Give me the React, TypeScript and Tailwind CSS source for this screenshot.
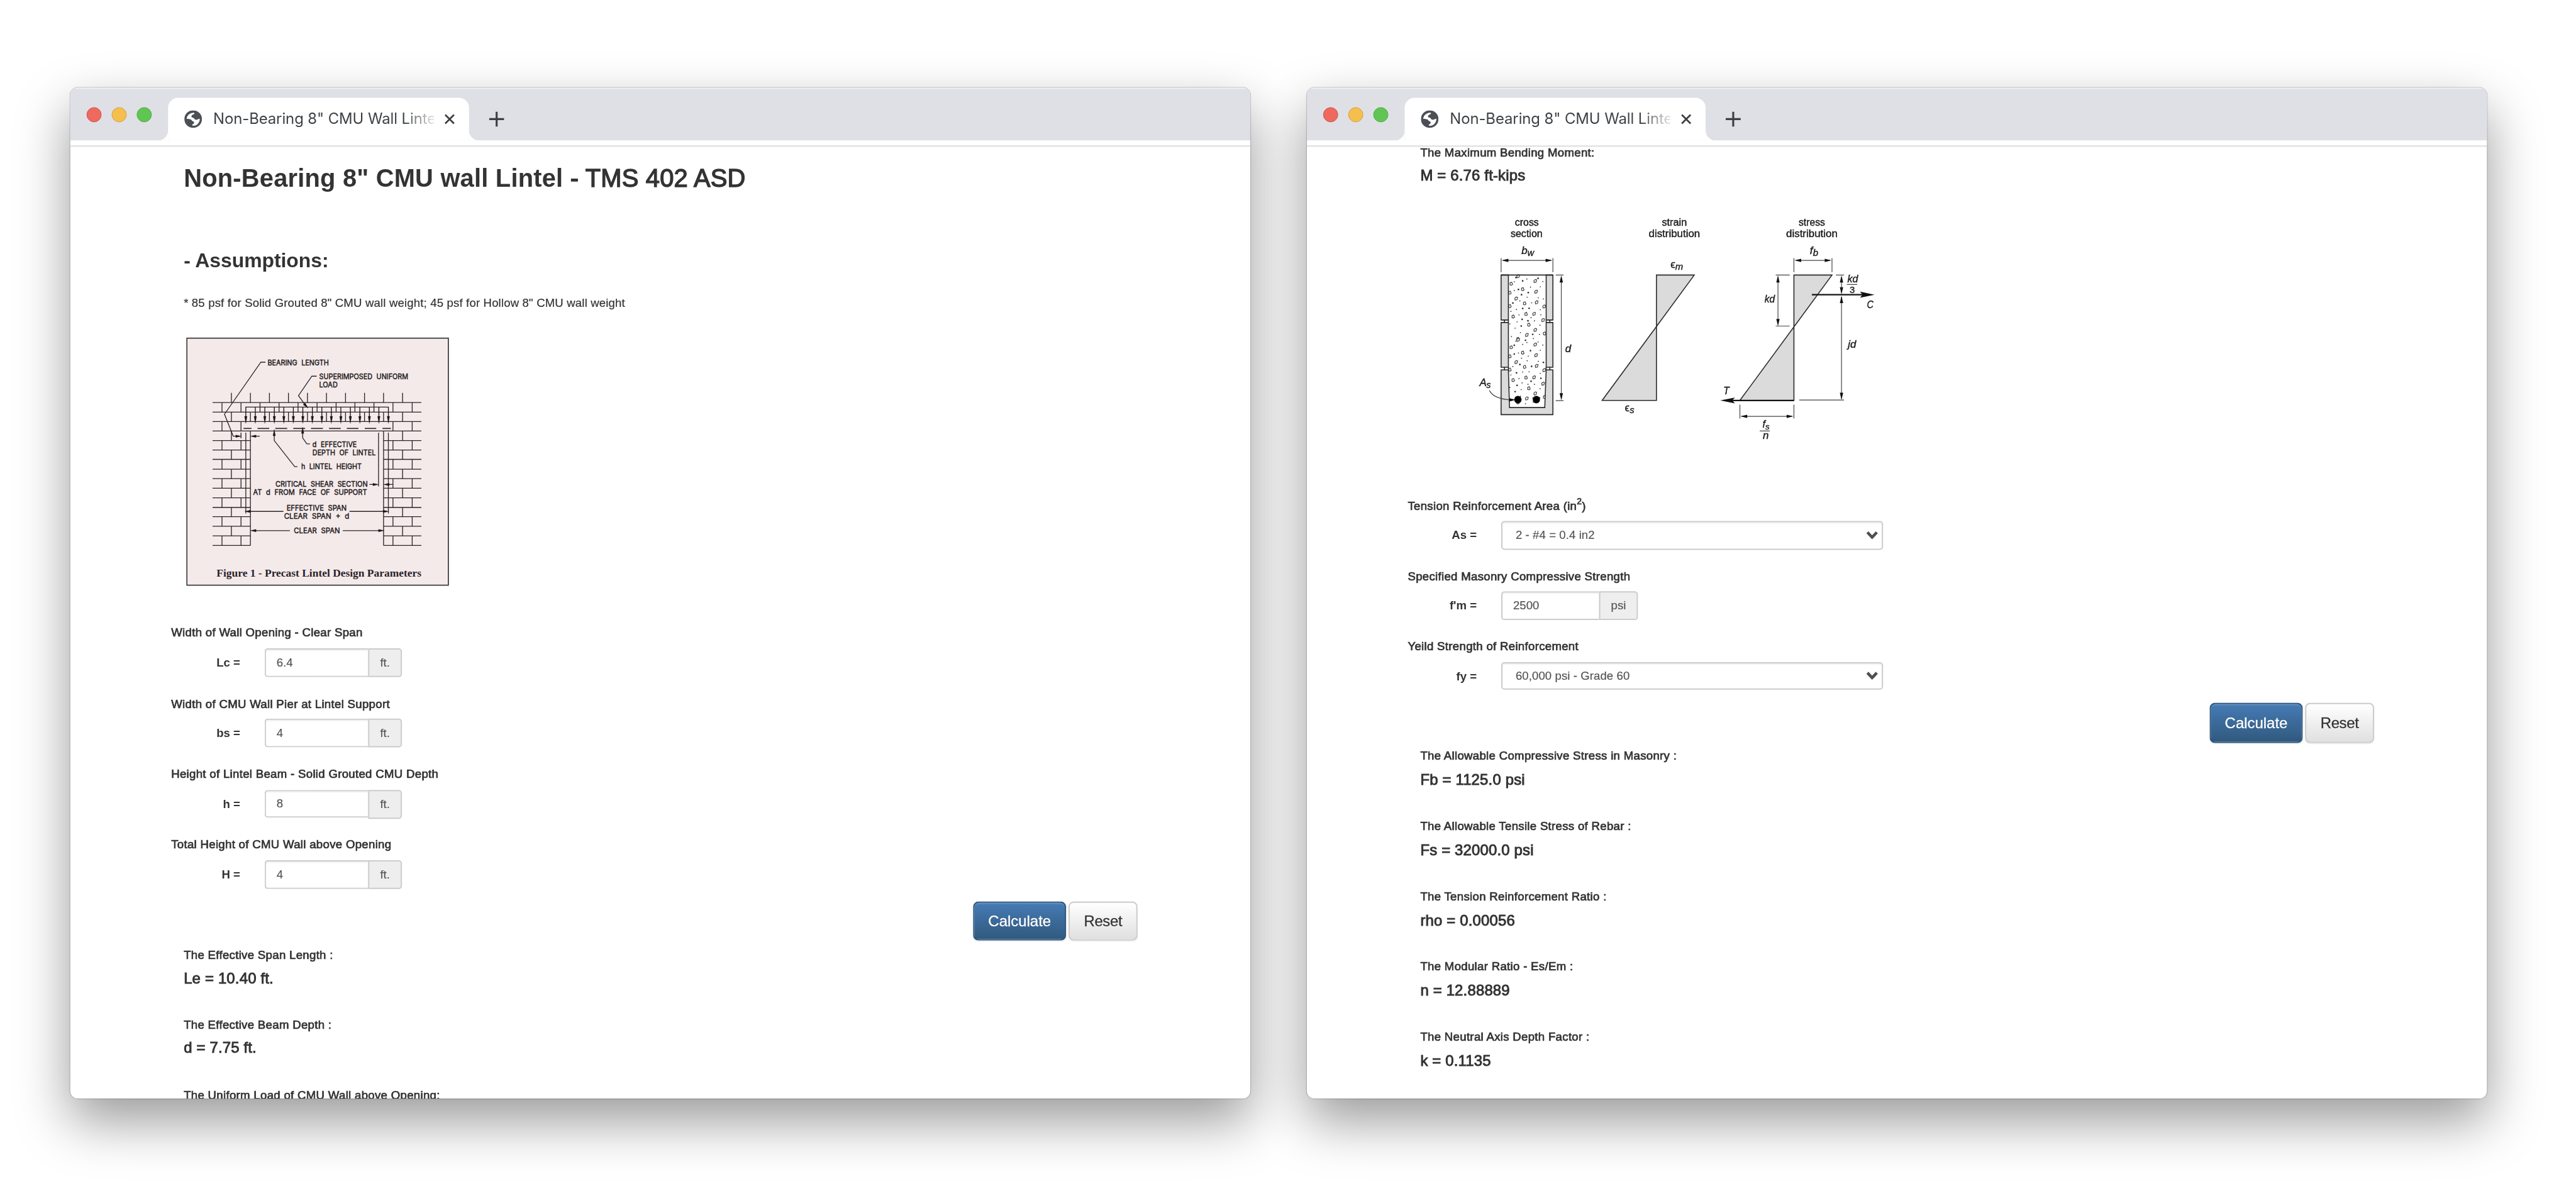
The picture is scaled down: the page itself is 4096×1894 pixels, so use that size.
import type { ReactNode } from 'react';

/* ---------- Figure 1: precast lintel ---------- */

const FigText = ({ x, y, w, children }: { x: number; y: number; w: number; children: string }) => (
  <text x={x} y={y} textLength={w} lengthAdjust="spacingAndGlyphs" wordSpacing="12" fontSize="37" fontFamily="Inter, 'Liberation Sans', sans-serif" fill="#1c1a1a" stroke="#1c1a1a" strokeWidth="1.4">
    {children}
  </text>
);

type Dir = 'up' | 'down' | 'left' | 'right';

/* Solid arrowhead whose tip sits at (x, y) */
const Head = ({ x, y, dir, l = 27, w = 6 }: { x: number; y: number; dir: Dir; l?: number; w?: number }) => {
  const pts = {
    up: `${x},${y} ${x - w},${y + l} ${x + w},${y + l}`,
    down: `${x},${y} ${x - w},${y - l} ${x + w},${y - l}`,
    left: `${x},${y} ${x + l},${y - w} ${x + l},${y + w}`,
    right: `${x},${y} ${x - l},${y - w} ${x - l},${y + w}`,
  }[dir];
  return <polygon points={pts} />;
};

const evenTop = [267, 358, 449, 540, 631, 722, 813, 904, 995, 1086];
const oddTop = [222, 313, 404, 495, 586, 677, 768, 858, 949, 1040, 1132];
const courses = [502, 548, 593, 638, 685, 730, 776, 822, 868, 912, 958, 1004, 1050];
const dashes = [[325, 363], [392, 448], [477, 534], [563, 620], [648, 705], [734, 790], [819, 875], [905, 960], [990, 1030]];

const LintelFigure = () => (
  <svg className="block h-[430px] w-[460px]" viewBox="0 0 1380 1290">
    <rect x="54" y="58" width="1251" height="1182" fill="#f5eaea" stroke="#333" strokeWidth="5" />
    <g stroke="#2a2626" strokeWidth="4" fill="none">
      {[366, 412, 457, 502].map((y) => <path key={y} d={`M177 ${y}H1176`} />)}
      {evenTop.map((x) => <path key={x} d={`M${x} 320V366M${x} 412V457`} />)}
      {oddTop.map((x) => <path key={x} d={`M${x} 366V412`} />)}
      <path d="M222 457V502M313 457V502M1040 457V502M1132 457V502" />
      {courses.slice(1).map((y) => <path key={y} d={`M177 ${y}H358M995 ${y}H1176`} />)}
      {courses.slice(0, -1).map((y, i) => (
        <path key={y} d={i % 2 === 0 ? `M267 ${y}v46M1086 ${y}v46` : `M222 ${y}v46M313 ${y}v46M1040 ${y}v46M1132 ${y}v46`} />
      ))}
      <path d="M358 502V1050M995 502V1050" />
      <path d="M334 388H1020" />
      {dashes.map(([a, b]) => <path key={a} d={`M${a} 490H${b}`} strokeWidth="5" />)}
      <path d="M430 173H408L234 422L276 527H300M313 510V537M403 527H375" />
      <path d="M675 240H652L588 333L622 380" />
      <path d="M643 564H628L608 535V500" />
      <path d="M583 673H570L472 548V510" />
      <path d="M336 510V897M1018 510V897M971 510V767" />
      <path d="M927 758H950M1040 758H1015" />
      <path d="M350 887H516M832 887H1005M372 979H547M800 979H982" />
    </g>
    <g fill="#161414" stroke="#161414" strokeWidth="1">
      {Array.from({ length: 16 }, (_, i) => 336 + i * 45.47).map((x) => (
        <g key={x}>
          <path d={`M${x} 388V440`} strokeWidth="4" />
          <Head x={x} y={466} dir="down" l={34} />
        </g>
      ))}
      <Head x={315} y={527} dir="right" />
      <Head x={358} y={527} dir="left" />
      <polygon points="634,393 610,376 620,368" />
      <Head x={608} y={484} dir="up" l={30} />
      <Head x={472} y={495} dir="up" l={30} />
      <Head x={971} y={758} dir="right" />
      <Head x={995} y={758} dir="left" />
      <Head x={331} y={887} dir="left" />
      <Head x={1020} y={887} dir="right" />
      <Head x={358} y={979} dir="left" />
      <Head x={998} y={979} dir="right" />
    </g>
    <FigText x={440} y={187} w={293}>BEARING LENGTH</FigText>
    <FigText x={687} y={253} w={426}>SUPERIMPOSED UNIFORM</FigText>
    <FigText x={687} y={292} w={88}>LOAD</FigText>
    <FigText x={655} y={578} w={212}>d EFFECTIVE</FigText>
    <FigText x={655} y={618} w={302}>DEPTH OF LINTEL</FigText>
    <FigText x={601} y={686} w={289}>h LINTEL HEIGHT</FigText>
    <FigText x={478} y={768} w={441}>CRITICAL SHEAR SECTION</FigText>
    <FigText x={371} y={807} w={545}>AT d FROM FACE OF SUPPORT</FigText>
    <FigText x={531} y={884} w={287}>EFFECTIVE SPAN</FigText>
    <FigText x={519} y={923} w={312}>CLEAR SPAN + d</FigText>
    <FigText x={566} y={991} w={220}>CLEAR SPAN</FigText>
    <text x="196" y="1198" textLength="980" lengthAdjust="spacingAndGlyphs" fontSize="53" fontWeight="700" fontFamily="'Liberation Serif', serif" fill="#28242a">
      Figure 1 - Precast Lintel Design Parameters
    </text>
  </svg>
);

/* ---------- Stress / strain diagram ---------- */

const pebbles = [
  [204, 362], [179, 398], [265, 385], [220, 424], [268, 436], [174, 441], [197, 469], [227, 492], [270, 487], [174, 505],
  [297, 507], [232, 543], [261, 542], [186, 555], [293, 572], [242, 594], [265, 619], [298, 636], [235, 643], [203, 662],
];
const specks = [
  [220, 384], [292, 387], [248, 414], [196, 368], [236, 462], [252, 489], [205, 425], [283, 412], [190, 430], [216, 450],
  [276, 465], [210, 480], [243, 515], [283, 522], [198, 520], [220, 516], [207, 547], [285, 546], [239, 575], [262, 575],
  [200, 580], [218, 568], [174, 590], [250, 560], [215, 600], [282, 596], [193, 610], [256, 640], [212, 632], [280, 640],
  [230, 668], [258, 660], [180, 650], [275, 372], [235, 375], [190, 388], [185, 490], [178, 530], [294, 470], [240, 440],
];
const repeat = (pts: number[][]) => [...pts, ...pts.map(([x, y]) => [x, y + 304])].filter(([, y]) => y < 984);

/* The diagram's own units are 1568 x 1200, squeezed into 700 x 400 */
const Label = ({ x, y, size = 17, italic = true, anchor = 'start', w, children }: { x: number; y: number; size?: number; italic?: boolean; anchor?: 'start' | 'middle'; w?: number; children: string }) => (
  <text x={x / 2.24} y={y / 3} fontSize={size} fontStyle={italic ? 'italic' : 'normal'} textAnchor={anchor} textLength={w} lengthAdjust="spacingAndGlyphs" fontFamily="'Liberation Sans', sans-serif" fill="#1a1a1a" stroke="#1a1a1a" strokeWidth="0.4">
    {children}
  </text>
);

const VHead = ({ x, y, up }: { x: number; y: number; up?: boolean }) => <polygon points={up ? `${x},${y} ${x - 6},${y + 34} ${x + 6},${y + 34}` : `${x},${y} ${x - 6},${y - 34} ${x + 6},${y - 34}`} />;
const HHead = ({ x, y, left }: { x: number; y: number; left?: boolean }) => <polygon points={left ? `${x},${y} ${x + 24},${y - 8} ${x + 24},${y + 8}` : `${x},${y} ${x - 24},${y - 8} ${x - 24},${y + 8}`} />;

const StressDiagram = () => (
  <svg className="block h-[400px] w-[700px]" viewBox="0 0 700 400">
    <g transform="scale(0.446429 0.333333)">
      {repeat(specks).map(([x, y], i) => <ellipse key={i} cx={x} cy={y} rx={i % 3 === 0 ? 3 : 2} ry={i % 3 === 0 ? 4 : 2.6} fill="#333" />)}
      {repeat(pebbles).map(([x, y], i) => (
        <polygon key={i} points={i % 2 ? `${x - 4},${y - 5} ${x + 2},${y - 8} ${x + 5},${y + 3} ${x + 1},${y + 7} ${x - 4},${y + 5}` : `${x - 4},${y + 7} ${x - 5},${y - 2} ${x},${y - 8} ${x + 5},${y - 6} ${x + 3},${y + 5}`} fill="#fff" stroke="#444" strokeWidth="1.2" vectorEffect="non-scaling-stroke" />
      ))}
      <g fill="#dbdbdb" stroke="#2a2a2a" strokeWidth="1.6">
        <path vectorEffect="non-scaling-stroke" d="M143 356H169V571H143ZM143 583H169V797H143ZM304 356H328V571H304ZM304 583H328V797H304Z" />
        <path vectorEffect="non-scaling-stroke" d="M143 810H169L173 990H299L304 810H328V1024H143Z" />
        <path vectorEffect="non-scaling-stroke" d="M169 571V583M169 797V810M304 571V583M304 797V810M155 571V583M317 571V583M155 797V810M317 797V810M143 356H328" />
        <path vectorEffect="non-scaling-stroke" d="M698 356H833L504 956H698Z" />
        <path vectorEffect="non-scaling-stroke" d="M1189 356H1325L996 956H1189Z" />
      </g>
      <ellipse cx="203" cy="952" rx="13" ry="18" />
      <ellipse cx="269" cy="952" rx="13" ry="18" />
      <g fill="none" stroke="#444" strokeWidth="1.2">
        <path vectorEffect="non-scaling-stroke" d="M143 275V342M328 275V342M150 286H322" />
        <path vectorEffect="non-scaling-stroke" d="M338 356H366M338 957H366M358 365V948" />
        <path vectorEffect="non-scaling-stroke" d="M101 908C112 935 140 951 178 953" />
        <path vectorEffect="non-scaling-stroke" d="M1189 275V342M1325 275V342M1196 286H1318" />
        <path vectorEffect="non-scaling-stroke" d="M1124 356H1174M1124 600H1174M1132 365V592" />
        <path vectorEffect="non-scaling-stroke" d="M1339 356H1368M1359 365V440M1359 460V948M1208 954H1368" />
        <path vectorEffect="non-scaling-stroke" d="M996 976V1042M1189 976V1042M1002 1032H1182" />
        <path vectorEffect="non-scaling-stroke" d="M1378 401H1415M1067 1102H1103" />
      </g>
      <g fill="none" stroke="#111" strokeWidth="2.2">
        <path vectorEffect="non-scaling-stroke" d="M1253 450H1440M1189 956H965" />
      </g>
      <g fill="#111">
        <HHead x={145} y={286} left />
        <HHead x={326} y={286} />
        <VHead x={358} y={358} up />
        <VHead x={358} y={955} />
        <HHead x={196} y={953} />
        <HHead x={1191} y={286} left />
        <HHead x={1323} y={286} />
        <VHead x={1132} y={358} up />
        <VHead x={1132} y={600} />
        <VHead x={1359} y={358} up />
        <VHead x={1359} y={448} />
        <VHead x={1359} y={456} up />
        <VHead x={1359} y={953} />
        <HHead x={998} y={1032} left />
        <HHead x={1187} y={1032} />
        <polygon points="1477,450 1425,435 1434,450 1425,465" />
        <polygon points="926,956 978,942 969,956 978,970" />
      </g>
    </g>
    <Label x={235} y={121} size={16.5} italic={false} anchor="middle" w={38}>cross</Label>
    <Label x={234} y={174} size={16.5} italic={false} anchor="middle" w={51}>section</Label>
    <Label x={762} y={121} size={16.5} italic={false} anchor="middle" w={40}>strain</Label>
    <Label x={762} y={174} size={16.5} italic={false} anchor="middle" w={82}>distribution</Label>
    <Label x={1253} y={121} size={16.5} italic={false} anchor="middle" w={42}>stress</Label>
    <Label x={1253} y={174} size={16.5} italic={false} anchor="middle" w={82}>distribution</Label>
    <Label x={216} y={256}>b</Label>
    <Label x={237} y={264} size={14.5}>w</Label>
    <Label x={748} y={321} size={17} italic={false}>ϵ</Label>
    <Label x={765} y={331} size={15}>m</Label>
    <Label x={585} y={1008} size={17} italic={false}>ϵ</Label>
    <Label x={602} y={1017} size={15}>s</Label>
    <Label x={1246} y={256}>f</Label>
    <Label x={1257} y={264} size={15}>b</Label>
    <Label x={372} y={724}>d</Label>
    <Label x={66} y={886}>A</Label>
    <Label x={90} y={897} size={14.5}>s</Label>
    <Label x={1084} y={488} size={16.5} w={16.5}>kd</Label>
    <Label x={1380} y={390} size={16} w={17}>kd</Label>
    <Label x={1388} y={443} size={15} italic={false}>3</Label>
    <Label x={1450} y={513} w={10.5}>C</Label>
    <Label x={1382} y={704}>jd</Label>
    <Label x={937} y={927} w={9.5}>T</Label>
    <Label x={1077} y={1086} size={16}>f</Label>
    <Label x={1087} y={1095} size={13.5}>s</Label>
    <Label x={1078} y={1140}>n</Label>
  </svg>
);

/* ---------- Browser chrome ---------- */

const Globe = () => (
  <svg className="ml-[26px] size-7 shrink-0" viewBox="0 0 84 84">
    <circle cx="42" cy="42" r="42" fill="#4b5056" />
    <path fill="#fff" d="M11 41C12 24 26 11 47 11C50 15 46 20 39 21C34 23 32 30 36 34C42 34 46 37 49 42C54 46 60 46 66 42L74 40C74 58 62 73 44 74C38 74 36 72 38 68C44 66 48 62 46 56C44 52 36 52 34 46C32 42 22 42 11 41Z" />
  </svg>
);

const TabBar = () => (
  <div className="flex h-[84px] items-end bg-[#dfe0e6] shadow-[inset_0_2px_0_#f0f0f3]">
    <div className="flex w-[140px] gap-4 self-center pt-[2px] pl-[26px]">
      <span className="size-6 rounded-full border border-[#d5544a] bg-[#ed6a5e]" />
      <span className="size-6 rounded-full border border-[#d9a03c] bg-[#f5bf4f]" />
      <span className="size-6 rounded-full border border-[#4caf41] bg-[#61c554]" />
    </div>
    <svg className="size-4" viewBox="0 0 16 16">
      <path d="M16 0V16H0A16 16 0 0 0 16 0Z" fill="#fff" />
    </svg>
    <div className="flex h-[68px] w-[480px] items-center rounded-t-[16px] bg-white">
      <Globe />
      <div className="ml-[18px] h-[30px] w-[352px] overflow-hidden whitespace-nowrap bg-[linear-gradient(90deg,#3c4043_86%,rgba(60,64,67,0)_102%)] bg-clip-text font-[Inter,sans-serif] text-[24px] leading-[30px] tracking-[-0.1px] text-transparent">
        Non-Bearing 8" CMU Wall Lintel
      </div>
      <svg className="ml-[16px] size-[18px]" viewBox="0 0 18 18">
        <path d="M2 2L16 16M16 2L2 16" stroke="#3c4043" strokeWidth="2.700" />
      </svg>
    </div>
    <svg className="size-4" viewBox="0 0 16 16">
      <path d="M0 0V16H16A16 16 0 0 1 0 0Z" fill="#fff" />
    </svg>
    <svg className="mb-[22px] ml-4 size-6" viewBox="0 0 24 24">
      <path d="M12 0V24M0 12H24" stroke="#3c4043" strokeWidth="3.2" />
    </svg>
  </div>
);

const BrowserWindow = ({ className, children }: { className: string; children: ReactNode }) => (
  <section className={`absolute top-[140px] h-[1612px] w-[1882px] rounded-[12px] bg-white shadow-[0_0_0_1px_rgba(0,0,0,0.22),0_36px_84px_rgba(0,0,0,0.4)] ${className}`}>
    <div className="flex h-full flex-col overflow-hidden rounded-[12px]">
      <TabBar />
      <div className="h-2 shrink-0 bg-white" />
      <div className="h-0.5 shrink-0 bg-[#dcdde2]" />
      <div className="flex min-h-0 flex-1 flex-col overflow-hidden">{children}</div>
    </div>
  </section>
);

/* ---------- Form pieces ---------- */

const labelText = 'text-[18.667px] leading-7 tracking-[0.31px] [-webkit-text-stroke:0.75px_#333]';

const Field = ({ label, symbol, className = 'ml-[161px]', rowClass, children }: { label: ReactNode; symbol: string; className?: string; rowClass: string; children: ReactNode }) => (
  <div className={className}>
    <div className={labelText}>{label}</div>
    <div className={`flex items-start ${rowClass}`}>
      <div className="w-[110px] text-right text-[18.667px] leading-[46px] font-bold">{symbol}</div>
      <div className="ml-[39px]">{children}</div>
    </div>
  </div>
);

const UnitInput = ({ value, unit, inputClass = 'h-[46px] w-[165px]', unitClass = 'w-[54px]' }: { value: string; unit: string; inputClass?: string; unitClass?: string }) => (
  <div className="flex items-start text-[18.667px] leading-[42px] text-[#555] [-webkit-text-stroke:0.2px_#555]">
    <div className={`rounded-l-[5px] border-2 border-r-0 border-[#ccc] bg-white pl-[17px] shadow-[inset_0_2px_2px_rgba(0,0,0,0.06)] ${inputClass}`}>{value}</div>
    <div className={`h-[46px] rounded-r-[5px] border-2 border-[#ccc] bg-[#eee] text-center ${unitClass}`}>{unit}</div>
  </div>
);

const SelectBox = ({ value, className }: { value: string; className: string }) => (
  <div className={`flex w-[609px] items-center justify-between rounded-[5px] border-2 border-[#ccc] bg-white pr-[6px] pl-[21px] text-[18.667px] text-[#555] shadow-[inset_0_2px_2px_rgba(0,0,0,0.06)] ${className}`}>
    <span className="tracking-[0.07px] [-webkit-text-stroke:0.2px_#555]">{value}</span>
    <svg className="mb-[1px] h-[13px] w-[19px]" viewBox="0 0 19 13">
      <path d="M2 2L9.500 10L17 2" fill="none" stroke="#505050" strokeWidth="4.600" />
    </svg>
  </div>
);

const Buttons = ({ className }: { className: string }) => (
  <div className={`flex justify-end gap-1 pr-[180px] text-[24px] ${className}`}>
    <button className="h-full w-[148px] rounded-[8px] border-2 border-[#2b5580] bg-linear-to-b from-[#457bb4] to-[#31597f] text-white shadow-[inset_0_2px_0_rgba(255,255,255,0.15),0_1px_2px_rgba(0,0,0,0.1)] [-webkit-text-stroke:0.3px_#fff] text-shadow-[0_-1px_0_rgba(0,0,0,0.2)]">Calculate</button>
    <button className="h-full w-[110px] rounded-[8px] border-2 border-[#ccc] bg-linear-to-b from-white to-[#e0e0e0] tracking-[-0.35px] text-[#333] shadow-[0_1px_2px_rgba(0,0,0,0.1)] [-webkit-text-stroke:0.3px_#333] text-shadow-[0_1px_0_#fff]">Reset</button>
  </div>
);

const Result = ({ label, value, className = 'h-28', valueClass = 'mt-[7px]' }: { label: string; value: string; className?: string; valueClass?: string }) => (
  <div className={`ml-[181px] shrink-0 ${className}`}>
    <div className={labelText}>{label}</div>
    <div className={`text-[24px] leading-[34px] tracking-[0.17px] [-webkit-text-stroke:0.95px_#333] ${valueClass}`}>{value}</div>
  </div>
);

export default function App() {
  return (
    <div className="h-[1894px] w-[4096px] overflow-hidden bg-white">
      <div className="relative h-[1900px] w-[4108px] origin-top-left scale-[0.99708] font-['Liberation_Sans',Arial,sans-serif] text-[#333]">
        <BrowserWindow className="left-[112px]">
          <h2 className="mt-7 ml-[181px] text-[40px] leading-[44px] tracking-[0.2px] whitespace-nowrap">
            <b>Non-Bearing 8" CMU wall Lintel</b>
            <span className="[-webkit-text-stroke:1.4px_#333]"> - TMS 402 ASD</span>
          </h2>
          <h3 className="mt-[91px] ml-[181px] text-[32px] leading-9 font-bold tracking-[-0.05px]">- Assumptions:</h3>
          <p className="mt-[36px] ml-[181px] text-[18.667px] leading-7 tracking-[0.15px] [-webkit-text-stroke:0.2px_#333]">
            * 85 psf for Solid Grouted 8" CMU wall weight; 45 psf for Hollow 8" CMU wall weight
          </p>
          <div className="mt-[23px] ml-[168px] shrink-0">
            <LintelFigure />
          </div>
          <Field label="Width of Wall Opening - Clear Span" symbol="Lc =" className="mt-[45px] ml-[161px]" rowClass="mt-[11px]">
            <UnitInput value="6.4" unit="ft." />
          </Field>
          <Field label="Width of CMU Wall Pier at Lintel Support" symbol="bs =" className="mt-[29px] ml-[161px]" rowClass="mt-[9px]">
            <UnitInput value="4" unit="ft." />
          </Field>
          <Field label="Height of Lintel Beam - Solid Grouted CMU Depth" symbol="h =" className="mt-[29px] ml-[161px]" rowClass="mt-[11px]">
            <UnitInput value="8" unit="ft." inputClass="h-[44px] w-[165px] leading-[40px]" />
          </Field>
          <Field label="Total Height of CMU Wall above Opening" symbol="H =" className="mt-[27px] ml-[161px]" rowClass="mt-[11px]">
            <UnitInput value="4" unit="ft." />
          </Field>
          <Buttons className="mt-5 h-[62px] shrink-0" />
          <Result label="The Effective Span Length :" value="Le = 10.40 ft." className="mt-[9px] h-28" />
          <Result label="The Effective Beam Depth :" value="d = 7.75 ft." valueClass="mt-[5px]" />
          <Result label="The Uniform Load of CMU Wall above Opening:" value="" />
        </BrowserWindow>

        <BrowserWindow className="left-[2084px]">
          <Result label="The Maximum Bending Moment:" value="M = 6.76 ft-kips" className="-mt-1 h-[90px]" valueClass="mt-[5px]" />
          <div className="ml-[246px] shrink-0">
            <StressDiagram />
          </div>
          <Field
            label={<>Tension Reinforcement Area (in<span className="relative -top-[9px] text-[14px]">2</span>)</>}
            symbol="As ="
            className="mt-[73px] ml-[161px]"
            rowClass="mt-[9px]"
          >
            <SelectBox value="2 - #4 = 0.4 in2" className="h-[46px]" />
          </Field>
          <Field label="Specified Masonry Compressive Strength" symbol="f'm =" className="mt-[29px] ml-[161px]" rowClass="mt-[9px]">
            <UnitInput value="2500" unit="psi" inputClass="h-[46px] w-[156px]" unitClass="w-[62px]" />
          </Field>
          <Field label="Yeild Strength of Reinforcement" symbol="fy =" className="mt-[28px] ml-[161px]" rowClass="mt-[11px]">
            <SelectBox value="60,000 psi - Grade 60" className="h-[44px]" />
          </Field>
          <Buttons className="mt-[19px] h-[64px] shrink-0" />
          <Result label="The Allowable Compressive Stress in Masonry :" value="Fb = 1125.0 psi" className="mt-[7px] h-28" />
          <Result label="The Allowable Tensile Stress of Rebar :" value="Fs = 32000.0 psi" />
          <Result label="The Tension Reinforcement Ratio :" value="rho = 0.00056" />
          <Result label="The Modular Ratio - Es/Em :" value="n = 12.88889" />
          <Result label="The Neutral Axis Depth Factor :" value="k = 0.1135" />
        </BrowserWindow>
      </div>
    </div>
  );
}
